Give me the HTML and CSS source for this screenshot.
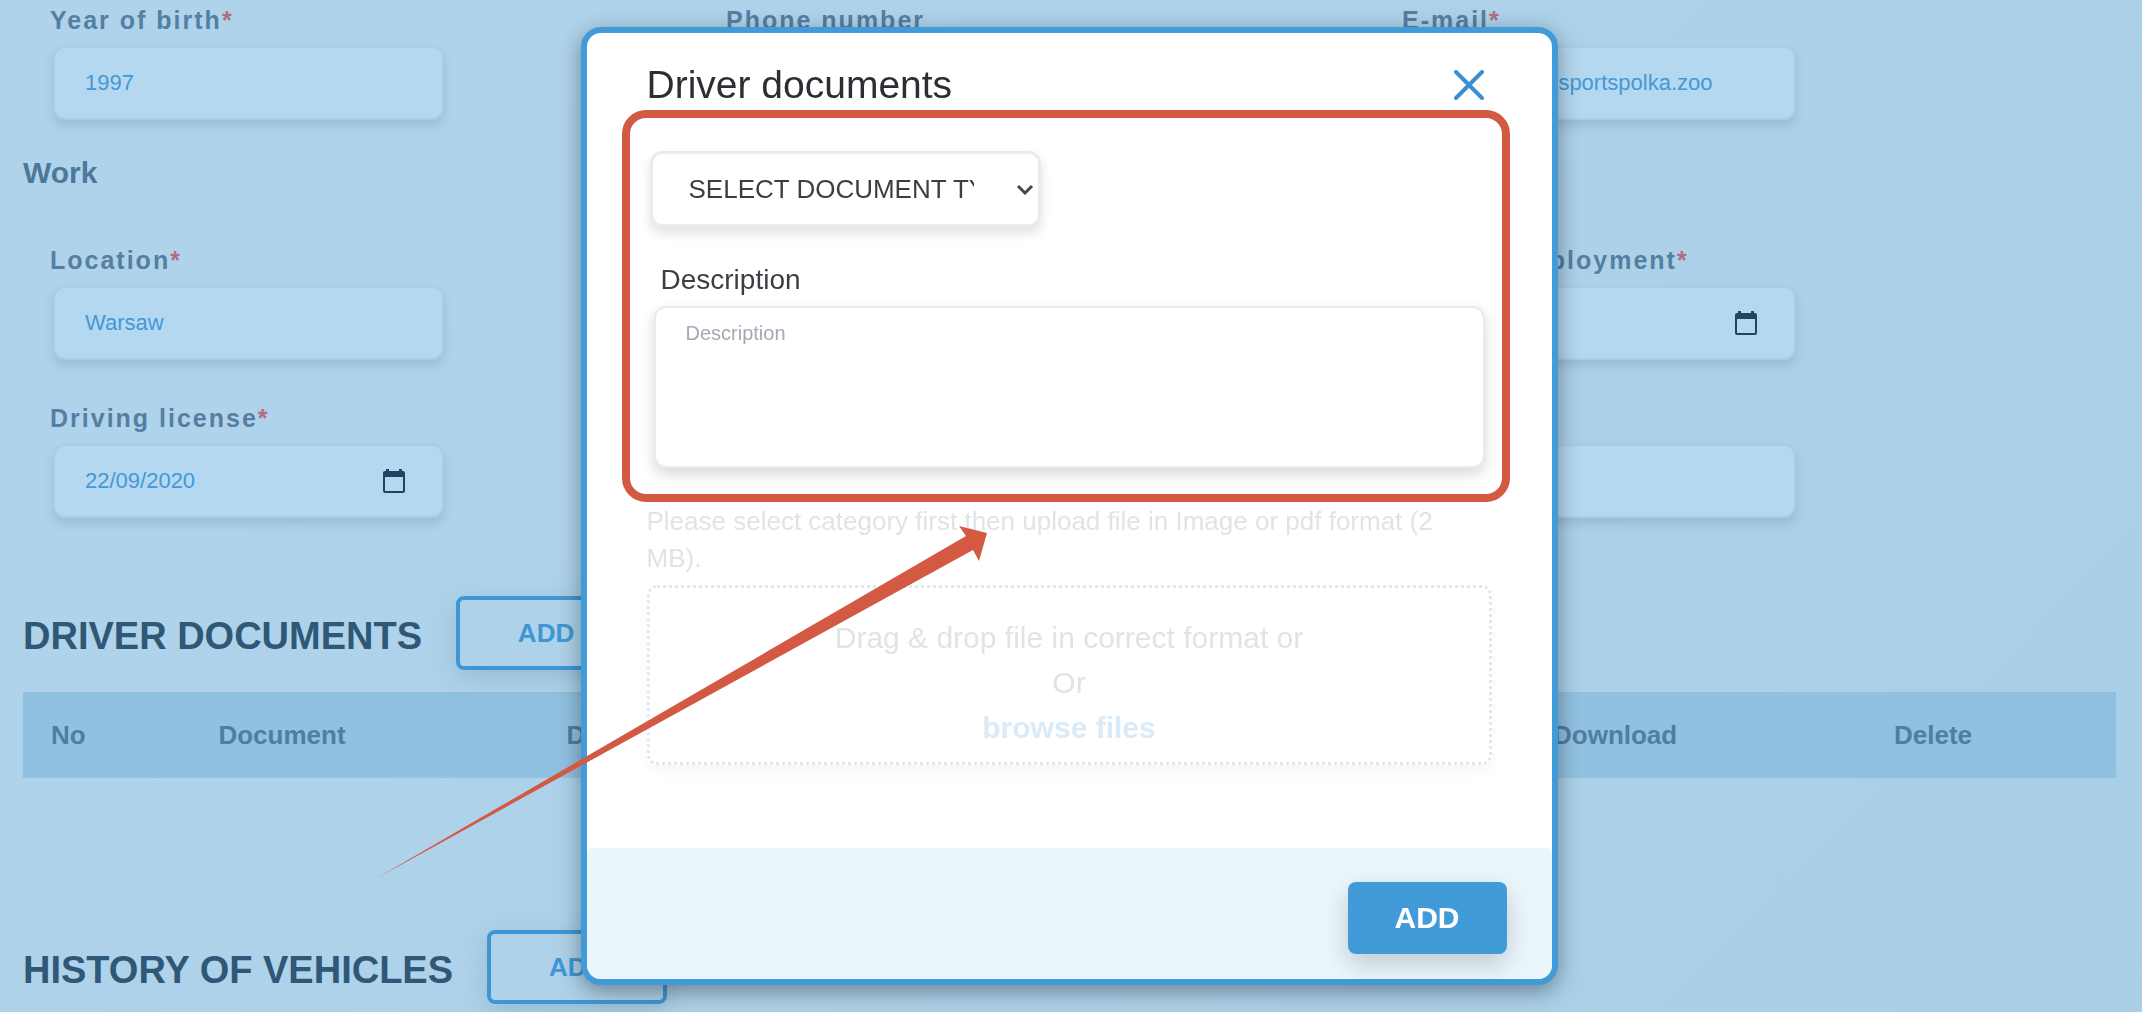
FILE: index.html
```html
<!DOCTYPE html>
<html lang="en">
<head>
<meta charset="utf-8">
<meta name="viewport" content="width=device-width, initial-scale=1">
<title>Driver documents</title>
<link rel="stylesheet" href="styles.css">
</head>
<body>
<main class="page">
  <div class="form-grid">
    <div class="field">
      <label class="field-label" for="birth">Year of birth<span class="required">*</span></label>
      <div class="field-box"><input class="field-input" id="birth" type="text" value="1997"></div>
    </div>
    <div class="field">
      <label class="field-label" for="phone">Phone number</label>
      <div class="field-box"><input class="field-input" id="phone" type="tel"></div>
    </div>
    <div class="field">
      <label class="field-label" for="email">E-mail<span class="required">*</span></label>
      <div class="field-box"><input class="field-input" id="email" type="text" value="kierowca1@sportspolka.zoo"></div>
    </div>
  </div>

  <h3 class="group-title">Work</h3>

  <div class="form-grid">
    <div class="field">
      <label class="field-label" for="location">Location<span class="required">*</span></label>
      <div class="field-box"><input class="field-input" id="location" type="text" value="Warsaw"></div>
    </div>
    <div class="field field-last">
      <label class="field-label" for="employment">Date of employment<span class="required">*</span></label>
      <div class="field-box">
        <input class="field-input" id="employment" type="text">
        <svg class="calendar" viewBox="0 0 22 24" aria-hidden="true"><path fill-rule="evenodd" d="M3 0h3v2h10V0h3v2h1a2 2 0 0 1 2 2v18a2 2 0 0 1-2 2H2a2 2 0 0 1-2-2V4a2 2 0 0 1 2-2h1zM2 8v14h18V8z"/></svg>
      </div>
    </div>
    <div class="field">
      <label class="field-label" for="license">Driving license<span class="required">*</span></label>
      <div class="field-box">
        <input class="field-input" id="license" type="text" value="22/09/2020">
        <svg class="calendar" viewBox="0 0 22 24" aria-hidden="true"><path fill-rule="evenodd" d="M3 0h3v2h10V0h3v2h1a2 2 0 0 1 2 2v18a2 2 0 0 1-2 2H2a2 2 0 0 1-2-2V4a2 2 0 0 1 2-2h1zM2 8v14h18V8z"/></svg>
      </div>
    </div>
    <div class="field field-last">
      <label class="field-label" for="notes">Notes</label>
      <div class="field-box"><input class="field-input" id="notes" type="text"></div>
    </div>
  </div>

  <section class="records">
    <div class="records-head">
      <h2 class="records-title">DRIVER DOCUMENTS</h2>
      <button class="outline-button" type="button">ADD</button>
    </div>
    <table class="records-table">
      <thead>
        <tr>
          <th class="col-no">No</th>
          <th class="col-document">Document</th>
          <th>Description</th>
          <th class="col-download">Download</th>
          <th class="col-delete">Delete</th>
        </tr>
      </thead>
    </table>
  </section>

  <section class="records records-history">
    <div class="records-head">
      <h2 class="records-title">HISTORY OF VEHICLES</h2>
      <button class="outline-button" type="button">ADD</button>
    </div>
  </section>
</main>

<div class="overlay">
  <div class="modal" role="dialog" aria-modal="true" aria-labelledby="modal-title">
    <div class="modal-body">
      <header class="modal-head">
        <h1 class="modal-title" id="modal-title">Driver documents</h1>
        <button class="close" type="button" aria-label="Close">
          <svg class="close-icon" viewBox="0 0 30 30" aria-hidden="true"><path d="M2 2l26 26M28 2L2 28"/></svg>
        </button>
      </header>

      <div class="select-box">
        <select class="type-select" aria-label="Document type">
          <option>SELECT DOCUMENT TYPE</option>
        </select>
        <svg class="chevron" viewBox="0 0 18 11" aria-hidden="true"><path d="M2 2l7 7 7-7"/></svg>
      </div>

      <label class="desc-label" for="description">Description</label>
      <textarea class="desc-input" id="description" placeholder="Description"></textarea>

      <p class="hint">Please select category first then upload file in Image or pdf format (2 MB).</p>
      <div class="dropzone">
        <span>Drag &amp; drop file in correct format or</span>
        <span>Or</span>
        <a class="browse" href="#">browse files</a>
      </div>
    </div>
    <footer class="modal-foot">
      <button class="solid-button" type="button">ADD</button>
    </footer>

    <div class="highlight"></div>
    <svg class="arrow" viewBox="0 0 612 354" aria-hidden="true"><path d="M0 354L589 12l-7-10 28 7-8 28-6-11z"/></svg>
  </div>
</div>
</body>
</html>
```

FILE: styles.css
```css
* {
  box-sizing: border-box;
}

body {
  margin: 0;
  height: 100vh;
  overflow: hidden;
  font-family: "Liberation Sans", Arial, sans-serif;
  background: linear-gradient(135deg, #afd3ea 20%, #a9cfe8);
}

h1, h2, h3, p {
  margin: 0;
}

input, select, textarea, button {
  font-family: inherit;
}

.page {
  padding: 5px 26px 0 23px;
}

/* Form behind the dialog */
.form-grid {
  display: grid;
  grid-template-columns: repeat(3, 1fr);
  row-gap: 43px;
  padding: 0 38px 0 27px;
}

.field-last {
  grid-column: 3;
}

.field-label {
  display: block;
  font-size: 25px;
  font-weight: 700;
  line-height: 30px;
  letter-spacing: 2px;
  color: #547fa3;
}

.required {
  color: #b46c7e;
}

.field-box {
  display: flex;
  align-items: center;
  width: 391px;
  height: 74px;
  margin: 11px 0 0 3px;
  padding: 0 37px 0 30px;
  background: #b4d8f0;
  border: 2px solid #a9cde6;
  border-radius: 12px;
  box-shadow: 0 6px 10px rgba(60, 100, 130, 0.18);
}

.field-input {
  flex: 1;
  min-width: 0;
  padding: 0;
  border: 0;
  background: none;
  font-size: 22px;
  color: #4399d6;
}

.calendar {
  width: 22px;
  height: 24px;
  fill: #204562;
}

.group-title {
  margin: 35px 0 54px;
  font-size: 30px;
  line-height: 36px;
  color: #4e7899;
}

.records {
  margin-top: 78px;
}

.records-history {
  margin-top: 152px;
}

.records-head {
  display: flex;
  align-items: center;
  gap: 34px;
}

.records-title {
  padding-top: 6px;
  font-size: 38px;
  line-height: 44px;
  color: #2f5877;
}

.outline-button {
  width: 180px;
  height: 74px;
  border: 4px solid #4096d3;
  border-radius: 8px;
  background: none;
  box-shadow: 0 8px 24px rgba(60, 100, 130, 0.2);
  font-size: 26px;
  font-weight: 700;
  color: #4096d3;
}

.records-table {
  width: 100%;
  margin-top: 22px;
  table-layout: fixed;
  border-collapse: collapse;
}

.records-table th {
  height: 86px;
  padding: 0 0 0 28px;
  background: #91c1e0;
  font-size: 26px;
  text-align: left;
  color: #517da1;
}

.col-no {
  width: 8%;
}

.records-table .col-document {
  width: 348px;
}

.records-table .col-download {
  width: 341px;
}

.records-table .col-delete {
  width: 250px;
}

/* Dialog */
.overlay {
  position: fixed;
  inset: 0;
  display: flex;
  align-items: center;
  justify-content: center;
  padding-right: 4px;
}

.modal {
  position: relative;
  width: 977px;
  background: #fff;
  border: 6px solid #429bd9;
  border-radius: 20px;
  box-shadow: 0 6px 22px rgba(0, 0, 0, 0.38);
}

.modal-body {
  padding: 28px 60px 83px;
}

.modal-head {
  display: flex;
  align-items: center;
  justify-content: space-between;
}

.modal-title {
  font-size: 39px;
  font-weight: 400;
  line-height: 48px;
  color: #2b2e33;
}

.close {
  display: flex;
  padding: 8px;
  border: 0;
  background: none;
}

.close-icon {
  width: 30px;
  height: 30px;
  fill: none;
  stroke: #3d8fcf;
  stroke-width: 4;
  stroke-linecap: round;
}

.select-box {
  position: relative;
  width: 391px;
  margin: 42px 0 0 3px;
}

.type-select {
  display: block;
  width: 100%;
  height: 76px;
  padding: 0 64px 0 36px;
  appearance: none;
  background: #fff;
  border: 3px solid #e8ebef;
  border-radius: 12px;
  box-shadow: 0 6px 12px rgba(0, 0, 0, 0.12);
  font-size: 26px;
  color: #3b3e43;
}

.chevron {
  position: absolute;
  top: 33px;
  right: 7px;
  width: 18px;
  height: 11px;
  fill: none;
  stroke: #44474c;
  stroke-width: 3;
  pointer-events: none;
}

.desc-label {
  display: block;
  margin: 37px 0 10px 14px;
  font-size: 28px;
  line-height: 32px;
  color: #3b3e43;
}

.desc-input {
  display: block;
  width: calc(100% - 14px);
  height: 162px;
  margin-left: 7px;
  padding: 13px 30px;
  resize: none;
  background: #fff;
  border: 2px solid #e8ebef;
  border-radius: 12px;
  box-shadow: 0 6px 14px rgba(0, 0, 0, 0.16);
  font-size: 20px;
  line-height: 24px;
}

.desc-input::placeholder {
  color: #a3a9b5;
}

.hint {
  margin-top: 35px;
  font-size: 26px;
  line-height: 37px;
  color: #e1e3e6;
}

.dropzone {
  display: flex;
  flex-direction: column;
  align-items: center;
  margin-top: 8px;
  padding: 27px 0 12px;
  border: 3px dotted #d9e9f6;
  border-radius: 10px;
  box-shadow: 0 8px 12px rgba(0, 0, 0, 0.03);
  font-size: 30px;
  line-height: 45px;
  color: #e1e3e6;
}

.browse {
  font-weight: 700;
  text-decoration: none;
  color: #d9ebf8;
}

.modal-foot {
  display: flex;
  justify-content: flex-end;
  padding: 34px 45px 25px;
  background: #eaf6fc;
  border-radius: 6px 6px 14px 14px;
}

.solid-button {
  width: 159px;
  height: 72px;
  border: 0;
  border-radius: 8px;
  background: #429bd9;
  box-shadow: 0 10px 26px rgba(0, 0, 0, 0.18);
  font-size: 30px;
  font-weight: 700;
  color: #fff;
}

/* Callout marks over the dialog */
.highlight {
  position: absolute;
  top: 77px;
  left: 35px;
  right: 42px;
  height: 392px;
  border: 8px solid #d35943;
  border-radius: 24px;
  pointer-events: none;
}

.arrow {
  position: absolute;
  top: 491px;
  left: -210px;
  width: 612px;
  height: 354px;
  overflow: visible;
  fill: #d35943;
  pointer-events: none;
}
```
